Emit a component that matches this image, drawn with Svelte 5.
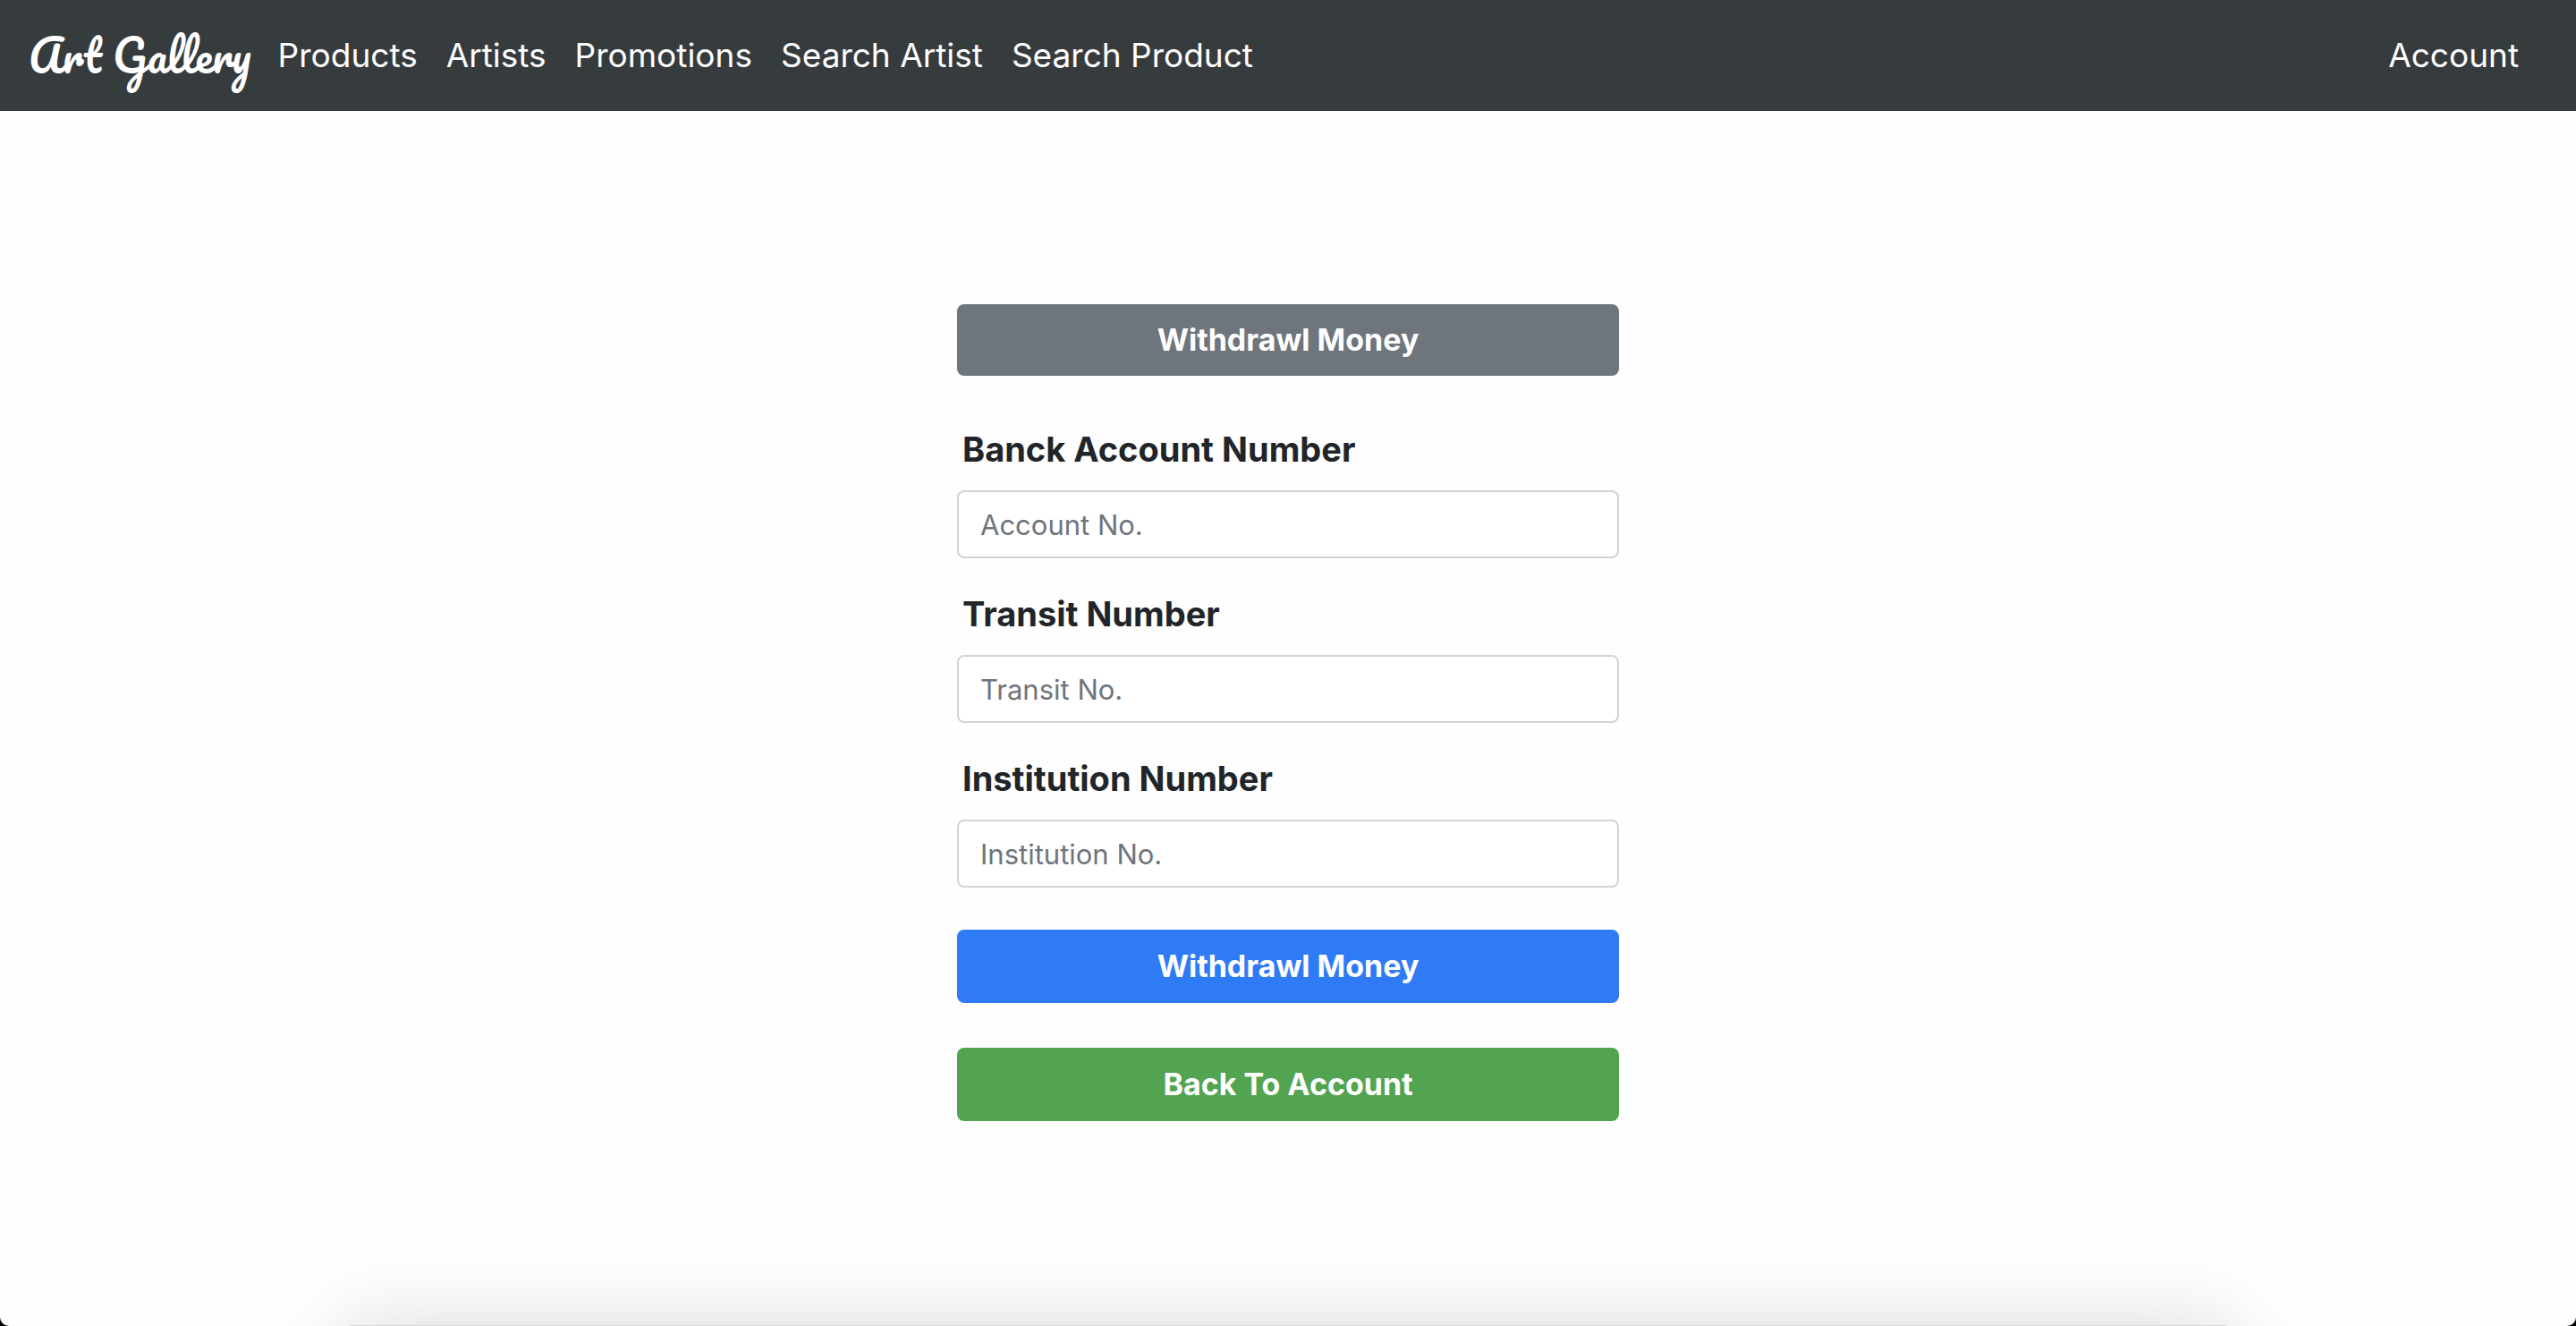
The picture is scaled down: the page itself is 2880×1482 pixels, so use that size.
<script>
  const links = ['Products', 'Artists', 'Promotions', 'Search Artist', 'Search Product'];
  const fields = [
    { id: 'account', label: 'Banck Account Number', placeholder: 'Account No.' },
    { id: 'transit', label: 'Transit Number', placeholder: 'Transit No.' },
    { id: 'institution', label: 'Institution Number', placeholder: 'Institution No.' },
  ];
</script>

<div class="page">
  <header class="navbar">
    <a class="brand" href="#home">Art Gallery</a>
    <nav class="links">
      {#each links as link}
        <a href="#{link.toLowerCase().replace(' ', '-')}">{link}</a>
      {/each}
      <a class="account" href="#account-page">Account</a>
    </nav>
  </header>

  <main>
    <form class="withdraw" onsubmit={(e) => e.preventDefault()}>
      <h1 class="title">Withdrawl Money</h1>
      {#each fields as field}
        <div class="field">
          <label for={field.id}>{field.label}</label>
          <input id={field.id} type="text" placeholder={field.placeholder} />
        </div>
      {/each}
      <div class="actions">
        <button class="primary" type="submit">Withdrawl Money</button>
        <button class="success" type="button">Back To Account</button>
      </div>
    </form>
  </main>

  <div class="bottom-shadow" aria-hidden="true"></div>
</div>

<style>
  :global(body) {
    margin: 0;
    background: #000;
  }

  .page {
    position: relative;
    display: flex;
    flex-direction: column;
    min-height: 100vh;
    overflow: hidden;
    background: #fefefe;
    border-radius: 0 0 10px 10px;
    color: #212529;
    font-family: Inter, 'Liberation Sans', sans-serif;
    font-size: 32px;
    line-height: 48px;
  }

  .navbar {
    display: flex;
    align-items: center;
    gap: 30px;
    box-sizing: border-box;
    min-height: 124px;
    padding: 0 64px 0 32px;
    background: #363b3e;
  }

  .navbar a {
    color: #fff;
    text-decoration: none;
    white-space: nowrap;
  }

  .brand {
    font-family: Pacifico, 'Liberation Serif', cursive;
    font-size: 48px;
    font-weight: 400;
    line-height: 60px;
  }

  .links {
    display: flex;
    flex: 1;
    align-items: center;
    gap: 32px;
    font-size: 37px;
  }

  .account {
    margin-left: auto;
  }

  main {
    display: flex;
    justify-content: center;
    padding: 216px 32px 96px;
  }

  .withdraw {
    display: flex;
    flex-direction: column;
    width: 100%;
    max-width: 740px;
  }

  .title {
    margin: 0 0 52px;
    padding: 16px;
    border-radius: 8px;
    background: #6e757c;
    color: #fff;
    font-size: 34px;
    font-weight: 700;
    line-height: 48px;
    text-align: center;
  }

  .field {
    display: flex;
    flex-direction: column;
    gap: 16px;
  }

  .field + .field {
    margin-top: 32px;
  }

  label {
    padding-left: 6px;
    font-size: 38px;
    font-weight: 700;
    line-height: 60px;
  }

  input {
    box-sizing: border-box;
    width: 100%;
    height: 76px;
    padding: 12px 24px;
    border: 2px solid #cfd4d9;
    border-radius: 8px;
    background: #fff;
    color: #495057;
    font-family: inherit;
    font-size: 31px;
  }

  input::placeholder {
    color: #6e757c;
    opacity: 1;
  }

  .actions {
    display: flex;
    flex-direction: column;
    gap: 50px;
    margin-top: 47px;
  }

  button {
    padding: 17px 24px;
    border: 0;
    border-radius: 8px;
    color: #fff;
    font-family: inherit;
    font-size: 34px;
    font-weight: 700;
    line-height: 48px;
    cursor: pointer;
  }

  .primary {
    background: #2f7bf6;
  }

  .success {
    background: #53a451;
  }

  /* Soft shadow rising from below the bottom edge */
  .bottom-shadow {
    position: absolute;
    right: 390px;
    bottom: -199px;
    left: 390px;
    height: 200px;
    background: #dadada;
    box-shadow: 0 10px 90px 6px rgba(0, 0, 0, 0.16);
    pointer-events: none;
  }
</style>
